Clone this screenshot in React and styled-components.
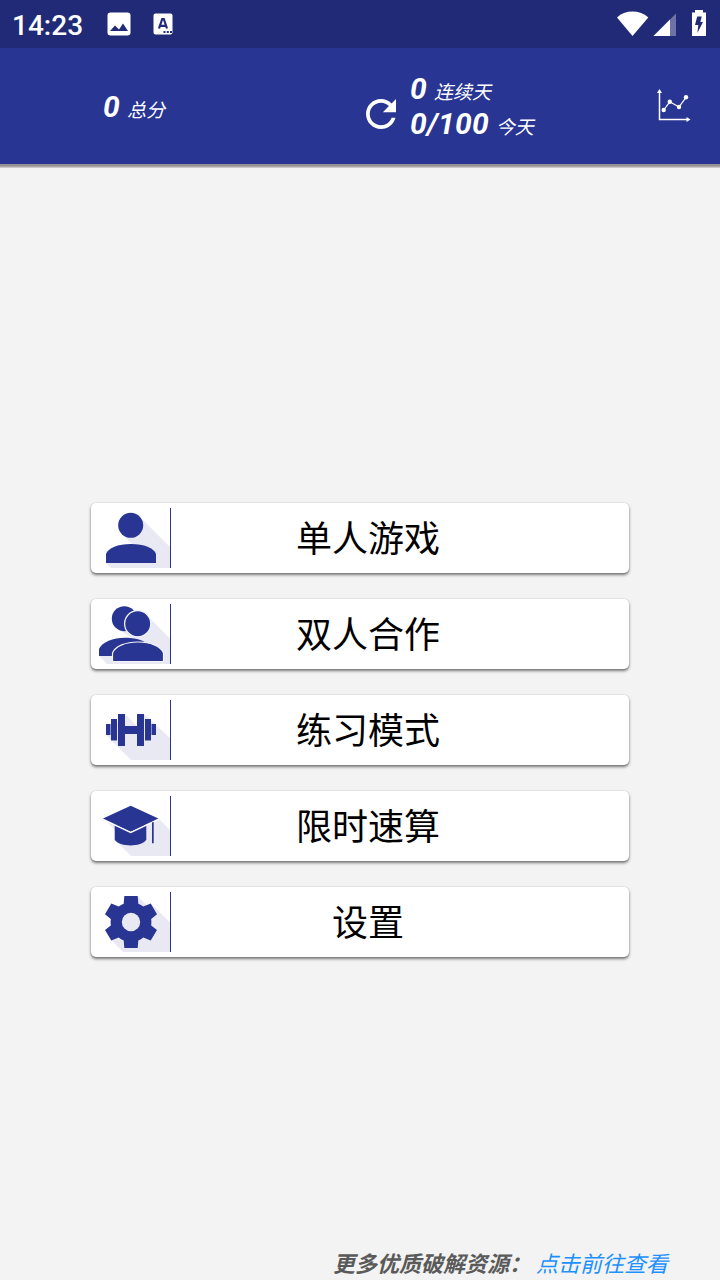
import React from "react";
import styled, { createGlobalStyle } from "styled-components";

const GlobalStyle = createGlobalStyle`
  * { box-sizing: border-box; }
  body {
    margin: 0;
    background: #f3f3f3;
    font-family: Roboto, "Noto Sans CJK SC", sans-serif;
  }
`;

const Screen = styled.div`
  width: 720px;
  height: 1280px;
  display: flex;
  flex-direction: column;
  overflow: hidden;
`;

const StatusBar = styled.div`
  height: 48px;
  flex: none;
  display: flex;
  align-items: center;
  padding: 0 12px;
  background: #202a76;
  color: #fff;
`;

const Clock = styled.span`
  width: 94px;
  padding-top: 3px;
  font-size: 28px;
  line-height: 48px;
  font-weight: 500;
`;

const StatusIcons = styled.div`
  display: flex;
  align-items: center;
  margin-left: ${p => (p.$right ? "auto" : "0")};
`;

const Header = styled.header`
  height: 116px;
  flex: none;
  display: flex;
  margin-bottom: 4px;
  background: #283593;
  color: #fff;
  box-shadow: 0 2px 0 #959191, 0 3px 0 #a9a7a7, 0 4px 0 #cbcaca;
`;

const Total = styled.div`
  width: 365px;
  padding: 41px 0 0 103px;
`;

const Daily = styled.div`
  width: 291px;
  display: flex;
  padding-top: 23px;
`;

const Refresh = styled.svg`
  width: 30px;
  height: 30px;
  flex: none;
  margin: 28px 14px 0 1px;
`;

const Score = styled.div`
  height: 35px;
  line-height: 35px;
  font-style: italic;
  white-space: nowrap;
`;

const Num = styled.b`
  display: inline-block;
  min-width: 17px;
  margin-right: 7px;
  font-size: 30px;
  letter-spacing: 0.25px;
`;

const Unit = styled.span`
  font-size: 19px;
`;

const ChartButton = styled.svg`
  width: 36px;
  height: 36px;
  margin-top: 40px;
`;

const Menu = styled.main`
  flex: 1;
  display: flex;
  flex-direction: column;
  align-items: center;
  gap: 26px;
  padding-top: 335px;
`;

const Item = styled.button`
  width: 538px;
  height: 70px;
  flex: none;
  display: flex;
  align-items: center;
  padding: 0;
  border: 0;
  border-radius: 5px;
  background: #fff;
  color: #000;
  box-shadow: 0 2px 3px rgba(0, 0, 0, 0.5), 0 0 2px rgba(0, 0, 0, 0.16);
`;

const ItemIcon = styled.svg`
  width: 80px;
  height: 60px;
  flex: none;
  fill: #283593;
  border-right: 1px solid #283593;
`;

const Label = styled.span`
  flex: 1;
  padding: 0 64px 4px 0;
  font: 36px/52px "Noto Sans CJK SC", sans-serif;
  text-align: center;
`;

const Footer = styled.footer`
  height: 34px;
  flex: none;
  display: flex;
  padding-left: 333px;
  font: italic 22px/33px "Noto Sans CJK SC", sans-serif;
  white-space: nowrap;
`;

const Note = styled.span`
  width: 203px;
  color: #5a5a5a;
  font-weight: 700;
`;

const Link = styled.a`
  color: #1e90ff;
`;

const Shade = ({ d }) => <path d={d} fill="#e9e9f3" />;

const items = [
  {
    label: "单人游戏",
    icon: (
      <>
        <Shade d="M48.5 8.5L79 39V60H20L15 55L41 36L31 26Z" />
        <circle cx="39.7" cy="17.3" r="12.5" />
        <path d="M15 55V46C17 40 27 36 40 36S63 40 65 46V55Z" />
      </>
    ),
  },
  {
    label: "双人合作",
    icon: (
      <>
        <Shade d="M55.5 11L79 34.5V60H16L8 52L44 36L24.5 23.5Z" />
        <circle cx="33.3" cy="14.7" r="12.5" />
        <path d="M8 52V45C11 38 22 33.7 34 33.7C44 33.7 53 36 57 41L40 52Z" />
        <circle cx="46.7" cy="19.7" r="13.1" stroke="#f3f3f9" strokeWidth="1.3" />
        <path
          d="M21.5 57.5V49C24 42 35 38 47 38S70 42 72.5 49V57.5Z"
          stroke="#f3f3f9"
          strokeWidth="1.2"
        />
      </>
    ),
  },
  {
    label: "练习模式",
    icon: (
      <>
        <Shade d="M34 14L46 26L53 14L79 38V60H40L15 35Z" />
        <g shapeRendering="crispEdges">
          <path d="M15 24h4v11h-4zM61 24h4v11h-4zM20 19h6v21h-6zM54 19h6v21h-6zM27 14h7v32h-7zM46 14h7v32h-7zM34 26h12v7.5h-12z" />
          <path d="M19 24h1v11h-1zM60 24h1v11h-1zM20 40h6v1h-6zM54 40h6v1h-6z" fill="#8c93c5" />
        </g>
      </>
    ),
  },
  {
    label: "限时速算",
    icon: (
      <>
        <Shade d="M12 22.3L67.3 22.3L79 34V60H40L24 44V34Z" />
        <path d="M23.7 29V43.7C26 47.5 33 49.4 39.5 49.4S53 47.5 55.3 43.7V29Z" />
        <path d="M10.8 22.8L39.7 36.3L68.6 22.8" fill="none" stroke="#fff" strokeWidth="1.6" />
        <path d="M12 22.6L39.7 9.8L67.4 22.6L39.7 35.5Z" />
        <path d="M61 26.5L62.7 25.7V47.3H61Z" />
      </>
    ),
  },
  {
    label: "设置",
    icon: (
      <>
        <Shade d="M46.7 4L56 14L59.7 11.3L79 30.6V60H32L20.3 48.3L26 20Z" />
        <path
          d="M33.3 4H46.7L47.3 11.7Q50 12.8 52.3 14.6L59.7 11.4L66 22.3L60.2 27Q60.6 30 60.2 33.5L66 38L59.7 48.6L52.3 45.6Q50 47.4 47.3 48.5L46.7 56H33.3L32.7 48.5Q30 47.4 27.7 45.6L20.3 48.6L14 38L19.8 33.5Q19.4 30 19.8 27L14 22.3L20.3 11.4L27.7 14.6Q30 12.8 32.7 11.7Z"
        />
        <circle cx="40" cy="30" r="9.2" fill="#e9e9f3" />
      </>
    ),
  },
];

const App = () => {
  return (
    <Screen>
      <GlobalStyle />
      <StatusBar>
        <Clock>14:23</Clock>
        <StatusIcons>
          <svg width="70" height="48" fill="#fff">
            <rect x="1.5" y="12.5" width="23" height="23" rx="3" />
            <path d="M4 31L9 25.5L13 29.5L17 23.5L22 31Z" fill="#202a76" />
            <rect x="47.5" y="13.5" width="19" height="21" rx="2" />
            <path
              d="M53 28.5L56.2 19H57.8L61 28.5M54.2 25.8H59.8"
              fill="none"
              stroke="#202a76"
              strokeWidth="2.2"
            />
            <path d="M57.5 31h2v2h-2zM60.8 31h2v2h-2zM64 31h2v2h-2z" fill="#202a76" />
          </svg>
        </StatusIcons>
        <StatusIcons $right>
          <svg width="92" height="48" fill="#fff">
            <path d="M16.5 36L1 17.5C5 13.5 10.5 11.6 16.5 11.6S28 13.5 32.3 17.5Z" />
            <path d="M37.5 36L60 13.5V36Z" opacity="0.35" />
            <path d="M37.5 36L54 19.5V36Z" />
            <path d="M79 10H87V12.5H90V36H76V12.5H79Z" />
            <path d="M81.2 16.5H85.8L84.3 22H87L81.4 33L82.3 25H79Z" fill="#202a76" />
          </svg>
        </StatusIcons>
      </StatusBar>

      <Header>
        <Total>
          <Score>
            <Num>0</Num>
            <Unit>总分</Unit>
          </Score>
        </Total>
        <Daily>
          <Refresh viewBox="4 4 16 16" fill="#fff">
            <path d="M17.65 6.35C16.2 4.9 14.21 4 12 4c-4.42 0-7.99 3.58-7.99 8s3.57 8 7.99 8c3.73 0 6.84-2.55 7.73-6h-2.08c-.82 2.33-3.04 4-5.65 4-3.31 0-6-2.69-6-6s2.69-6 6-6c1.66 0 3.14.69 4.22 1.78L13 11h7V4l-2.35 2.35z" />
          </Refresh>
          <div>
            <Score>
              <Num>0</Num>
              <Unit>连续天</Unit>
            </Score>
            <Score>
              <Num>0/100</Num>
              <Unit>今天</Unit>
            </Score>
          </div>
        </Daily>
        <ChartButton fill="#fff" stroke="#fff">
          <path d="M3.5 4V31.5H32" fill="none" strokeWidth="1.5" />
          <path d="M3.5 1L1 5H6ZM34.5 31.5L30.5 29V34Z" stroke="none" />
          <path d="M7.7 22L13.8 13.8L23 19L30 9.3" fill="none" strokeWidth="1.2" />
          <g stroke="none">
            <circle cx="7.7" cy="22" r="2.2" />
            <circle cx="13.8" cy="13.8" r="2.2" />
            <circle cx="23" cy="19" r="2.2" />
            <circle cx="30" cy="9.3" r="2.2" />
          </g>
        </ChartButton>
      </Header>

      <Menu>
        {items.map(item => (
          <Item key={item.label}>
            <ItemIcon viewBox="0 0 79 60">{item.icon}</ItemIcon>
            <Label>{item.label}</Label>
          </Item>
        ))}
      </Menu>

      <Footer>
        <Note>更多优质破解资源：</Note>
        <Link>点击前往查看</Link>
      </Footer>
    </Screen>
  );
};

export default App;
